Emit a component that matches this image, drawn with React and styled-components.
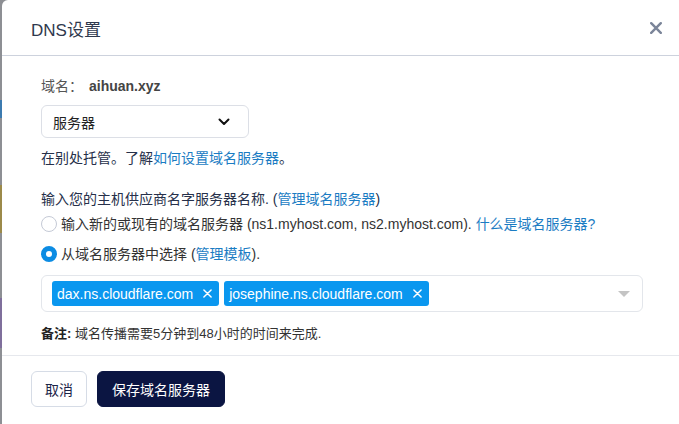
import styled, { createGlobalStyle } from "styled-components";

const GlobalStyle = createGlobalStyle`
	html, body {
		margin: 0;
		padding: 0;
		overflow: hidden;
	}
	body {
		background: linear-gradient(
			to bottom,
			#8d8f94 0px,
			#8d8f94 100px,
			#3c7bb0 100px,
			#3c7bb0 118px,
			#8d8f94 118px,
			#8d8f94 185px,
			#9c8a4a 185px,
			#9c8a4a 233px,
			#8d8f94 233px,
			#8d8f94 298px,
			#7f6f9c 298px,
			#7f6f9c 348px,
			#8d8f94 348px
		);
		font-family: "Liberation Sans", "Noto Sans CJK SC", sans-serif;
	}
`;

const Modal = styled.div`
	margin-left: 2px;
	width: 677px;
	min-height: 424px;
	background: #fff;
	border-radius: 6px 0 0 0;
	display: flex;
	flex-direction: column;
`;

const Header = styled.div`
	height: 56px;
	box-sizing: border-box;
	padding: 0 0 0 29px;
	display: flex;
	align-items: center;
	justify-content: space-between;
	border-bottom: 1px solid #cdd2dd;
	.title {
		font-size: 17px;
		color: #2f394e;
		padding-top: 1px;
	}
`;

const Close = styled.button`
	border: none;
	background: none;
	padding: 0;
	margin-right: 16px;
	width: 14px;
	height: 14px;
	display: flex;
	align-items: center;
	justify-content: center;
	cursor: pointer;
`;

const Body = styled.div`
	box-sizing: border-box;
	padding: 20px 36px 11px 39px;
	font-size: 14px;
	color: #2b2f3a;
`;

const Line = styled.div`
	line-height: 20px;
	margin-top: ${(p) => p.$mt || 0}px;
	color: ${(p) => p.$color || "#26304a"};
	font-size: ${(p) => p.$size || 14}px;
	b {
		font-weight: bold;
		color: #222;
	}
`;

const Label = styled.span`
	color: #555;
	margin-right: 6px;
`;

const Domain = styled.span`
	font-weight: bold;
	color: #444;
`;

const A = styled.a`
	color: #1b7cc3;
	text-decoration: none;
`;

const Select = styled.div`
	margin-top: 9px;
	width: 208px;
	height: 33px;
	box-sizing: border-box;
	border: 1px solid #dcdfe6;
	border-radius: 6px;
	display: flex;
	align-items: center;
	justify-content: space-between;
	padding: 0 18px 0 11px;
	color: #222;
`;

const RadioRow = styled.label`
	display: flex;
	align-items: center;
	gap: 4px;
	line-height: 20px;
	margin-top: ${(p) => p.$mt || 0}px;
	color: #333;
`;

const Radio = styled.span`
	width: 16px;
	height: 16px;
	box-sizing: border-box;
	border-radius: 50%;
	flex: none;
	border: ${(p) => (p.$checked ? "5px solid #0c8ce3" : "1px solid #c5cad6")};
	background: #fff;
`;

const TagBox = styled.div`
	margin-top: 11px;
	height: 37px;
	box-sizing: border-box;
	border: 1px solid #e3e6eb;
	border-radius: 6px;
	display: flex;
	align-items: center;
	gap: 5px;
	padding: 0 12px 0 10px;
`;

const Tag = styled.span`
	height: 25px;
	display: flex;
	align-items: center;
	background: #0a97ef;
	color: #fff;
	border-radius: 3px;
	padding: 0 7px 0 5px;
	gap: 10px;
	font-size: 14px;
`;

const Caret = styled.span`
	margin-left: auto;
	width: 0;
	height: 0;
	border-left: 6px solid transparent;
	border-right: 6px solid transparent;
	border-top: 6px solid #c4c4c4;
`;

const Footer = styled.div`
	border-top: 1px solid #e6e8ed;
	padding: 15px 29px;
	display: flex;
	gap: 10px;
`;

const Button = styled.button`
	height: 36px;
	box-sizing: border-box;
	padding: 0 ${(p) => (p.$primary ? 14 : 13)}px;
	border-radius: 6px;
	font-size: 14px;
	font-family: "Liberation Sans", "Noto Sans CJK SC", sans-serif;
	border: 1px solid ${(p) => (p.$primary ? "#0b1542" : "#d6dce6")};
	background: ${(p) => (p.$primary ? "#0b1542" : "#fff")};
	color: ${(p) => (p.$primary ? "#fff" : "#1c2548")};
`;

const X = ({ size = 9, color = "#fff", width = 1.6 }) => (
	<svg width={size} height={size} viewBox="0 0 10 10">
		<path d="M1 1L9 9M9 1L1 9" stroke={color} strokeWidth={width} strokeLinecap="round" />
	</svg>
);

const App = () => {
	return (
		<>
			<GlobalStyle />
			<Modal>
				<Header>
					<span className="title">DNS设置</span>
					<Close>
						<X size={12} color="#7b8599" width={2} />
					</Close>
				</Header>
				<Body>
					<Line>
						<Label>域名：</Label>
						<Domain>aihuan.xyz</Domain>
					</Line>
					<Select>
						<span>服务器</span>
						<svg width="12" height="8" viewBox="0 0 12 8">
							<path d="M1.5 1.5L6 6L10.5 1.5" fill="none" stroke="#111" strokeWidth="2" strokeLinecap="round" strokeLinejoin="round" />
						</svg>
					</Select>
					<Line $mt={10}>
						在别处托管。了解<A href="#">如何设置域名服务器</A>。
					</Line>
					<Line $mt={21}>
						输入您的主机供应商名字服务器名称. (<A href="#">管理域名服务器</A>)
					</Line>
					<RadioRow $mt={5}>
						<Radio />
						<span>
							输入新的或现有的域名服务器 (ns1.myhost.com, ns2.myhost.com). <A href="#">什么是域名服务器?</A>
						</span>
					</RadioRow>
					<RadioRow $mt={10}>
						<Radio $checked />
						<span>
							从域名服务器中选择 (<A href="#">管理模板</A>).
						</span>
					</RadioRow>
					<TagBox>
						<Tag>
							dax.ns.cloudflare.com
							<X />
						</Tag>
						<Tag>
							josephine.ns.cloudflare.com
							<X />
						</Tag>
						<Caret />
					</TagBox>
					<Line $mt={12} $size={13} $color="#333">
						<b>备注:</b> 域名传播需要5分钟到48小时的时间来完成.
					</Line>
				</Body>
				<Footer>
					<Button>取消</Button>
					<Button $primary>保存域名服务器</Button>
				</Footer>
			</Modal>
		</>
	);
};

export default App;
